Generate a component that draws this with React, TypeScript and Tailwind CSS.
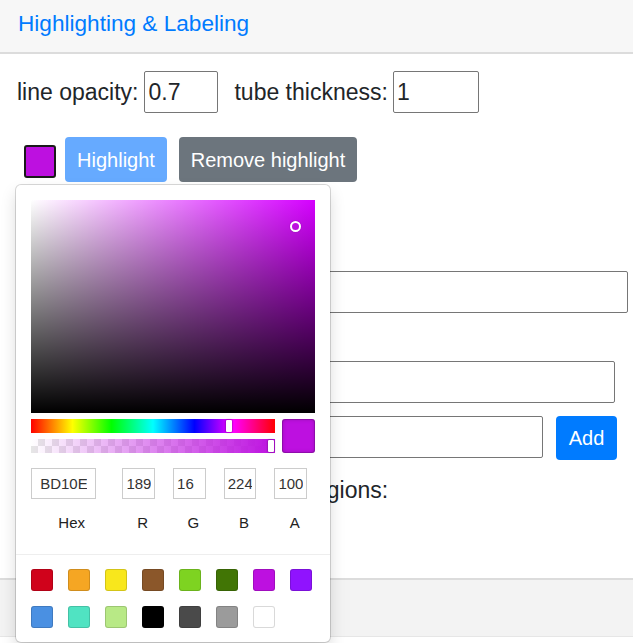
const presets = [
  "#D0021B", "#F5A623", "#F8E71C", "#8B572A", "#7ED321", "#417505", "#BD10E0", "#9013FE",
  "#4A90E2", "#50E3C2", "#B8E986", "#000000", "#4A4A4A", "#9B9B9B", "#FFFFFF",
];

const ColorPicker = () => {
  return (
    <div className="absolute left-[-1px] top-[48px] z-10 w-[314px] bg-white rounded-[5px] shadow-[0_0_0_1px_rgba(0,0,0,0.15),0_8px_16px_rgba(0,0,0,0.15)] pt-[15px] text-[20px] font-['Liberation_Sans',Arial,sans-serif]">
      <div className="px-[15px]">
        {/* saturation */}
        <div className="relative h-[213px] bg-[#d500ff] overflow-hidden">
          <div className="absolute inset-0 bg-[linear-gradient(to_right,#fff,rgba(255,255,255,0))]" />
          <div className="absolute inset-0 bg-[linear-gradient(to_top,#000,rgba(0,0,0,0))]" />
          <div className="absolute left-[259px] top-[21px] w-[11px] h-[11px] rounded-full border-2 border-white shadow-[0_0_1px_rgba(0,0,0,0.5)]" />
        </div>

        <div className="flex mt-[6px] gap-[7px]">
          <div className="flex-1 flex flex-col gap-[6px]">
            <div className="relative h-[14px] bg-[linear-gradient(to_right,#f00_0%,#ff0_17%,#0f0_33%,#0ff_50%,#00f_67%,#f0f_83%,#f00_100%)]">
              <div className="absolute left-[195px] top-[1px] w-[6px] h-[12px] rounded-[1px] bg-white shadow-[0_0_2px_rgba(0,0,0,0.6)]" />
            </div>
            <div className="relative h-[14px] bg-[conic-gradient(#e6e6e6_25%,#fff_0_50%,#e6e6e6_0_75%,#fff_0)] bg-[length:14px_14px]">
              <div className="absolute inset-0 bg-[linear-gradient(to_right,rgba(189,16,224,0),rgb(189,16,224))]" />
              <div className="absolute left-[237px] top-[1px] w-[6px] h-[12px] rounded-[1px] bg-white shadow-[0_0_2px_rgba(0,0,0,0.6)]" />
            </div>
          </div>
          <div className="w-[33px] h-[34px] rounded-[3px] bg-[#BD10E0] shadow-[inset_0_0_0_1px_rgba(0,0,0,0.15),inset_0_0_4px_rgba(0,0,0,0.25)]" />
        </div>

        <div className="flex mt-[15px] pb-[22px] text-[15px] text-[#333]">
          <div className="flex-[2]">
            <input readOnly value="BD10E0" className="w-[80%] h-[31px] px-[10%] border border-[#ccc] outline-none" />
            <div className="text-center text-[#222] leading-[18px] mt-[15px]">Hex</div>
          </div>
          {[["189", "R"], ["16", "G"], ["224", "B"], ["100", "A"]].map(([v, l]) => (
            <div key={l} className="flex-1 pl-[10px]">
              <input readOnly value={v} className="w-[80%] h-[31px] px-[10%] shadow-[inset_0_0_0_1px_#ccc] outline-none" />
              <div className="text-center text-[#222] leading-[18px] mt-[15px]">{l}</div>
            </div>
          ))}
        </div>
      </div>

      <div className="border-t border-[#eee] pl-[15px] pt-[14px] pb-[14px] flex flex-wrap gap-[15px]">
        {presets.map((c) => (
          <div
            key={c}
            className="w-[22px] h-[22px] rounded-[3px] shadow-[inset_0_0_0_1px_rgba(0,0,0,0.15)]"
            style={{ backgroundColor: c }}
          />
        ))}
      </div>
    </div>
  );
};

const App = () => {
  return (
    <div className="w-[633px] h-[643px] overflow-hidden bg-white text-[23px] text-[#212529] font-['Liberation_Sans',Arial,sans-serif]">
      <div className="h-[54px] bg-[#f7f7f7] border-b-2 border-[#dcdcdc] flex items-center pl-[18px] pb-[4px]">
        <h2 className="text-[22.6px] text-[#007bff]">Highlighting &amp; Labeling</h2>
      </div>

      <div className="pl-[17px] pr-[5px] pt-[17px]">
        <div className="flex items-center h-[42px]">
          <span>line opacity:</span>
          <input readOnly value="0.7" className="ml-[6px] w-[74px] h-[42px] px-[3px] border border-[#767676] rounded-[2px]" />
          <span className="ml-[16px]">tube thickness:</span>
          <input readOnly value="1" className="ml-[5px] w-[86px] h-[42px] px-[3px] border border-[#767676] rounded-[2px]" />
        </div>

        <div className="relative flex items-center mt-[24px] h-[45px] text-[20px]">
          <div className="ml-[7px] mt-[4px] w-[32px] h-[33px] rounded-[3px] border-2 border-[#1a1a1a] bg-[#BD10E0]" />
          <button className="ml-[9px] w-[102px] h-[45px] rounded-[4px] bg-[#66aaff] text-white">Highlight</button>
          <button className="ml-[12px] w-[178px] h-[45px] rounded-[4px] bg-[#6c757d] text-white">Remove highlight</button>
          <ColorPicker />
        </div>

        <div className="mt-[30px] leading-[30px]">Labels</div>

        <div className="flex items-center mt-[29px]">
          <span>Label text:</span>
          <input readOnly className="ml-[8px] flex-1 h-[42px] border border-[#767676] rounded-[2px]" />
        </div>

        <div className="flex items-center mt-[48px] pr-[13px]">
          <span>Label size:</span>
          <input readOnly className="ml-[8px] flex-1 h-[42px] border border-[#767676] rounded-[2px]" />
        </div>

        <div className="flex items-start mt-[13px] pr-[11px]">
          <span className="leading-[42px]">Region:</span>
          <input readOnly className="ml-[8px] flex-1 h-[42px] border border-[#767676] rounded-[2px]" />
          <button className="ml-[13px] w-[61px] h-[44px] rounded-[4px] bg-[#007bff] text-white text-[20px]">Add</button>
        </div>

        <div className="flex items-center mt-[15px] leading-[30px]">
          <input type="checkbox" readOnly className="w-[8px] h-[8px]" />
          <span>Show labels for highlighted regions:</span>
        </div>
      </div>

      <div className="mt-[73px] h-[59px] bg-[#f3f3f3] border-t-2 border-[#dcdcdc] border-b border-b-[#e6e6e6]" />
    </div>
  );
};

export default App;
